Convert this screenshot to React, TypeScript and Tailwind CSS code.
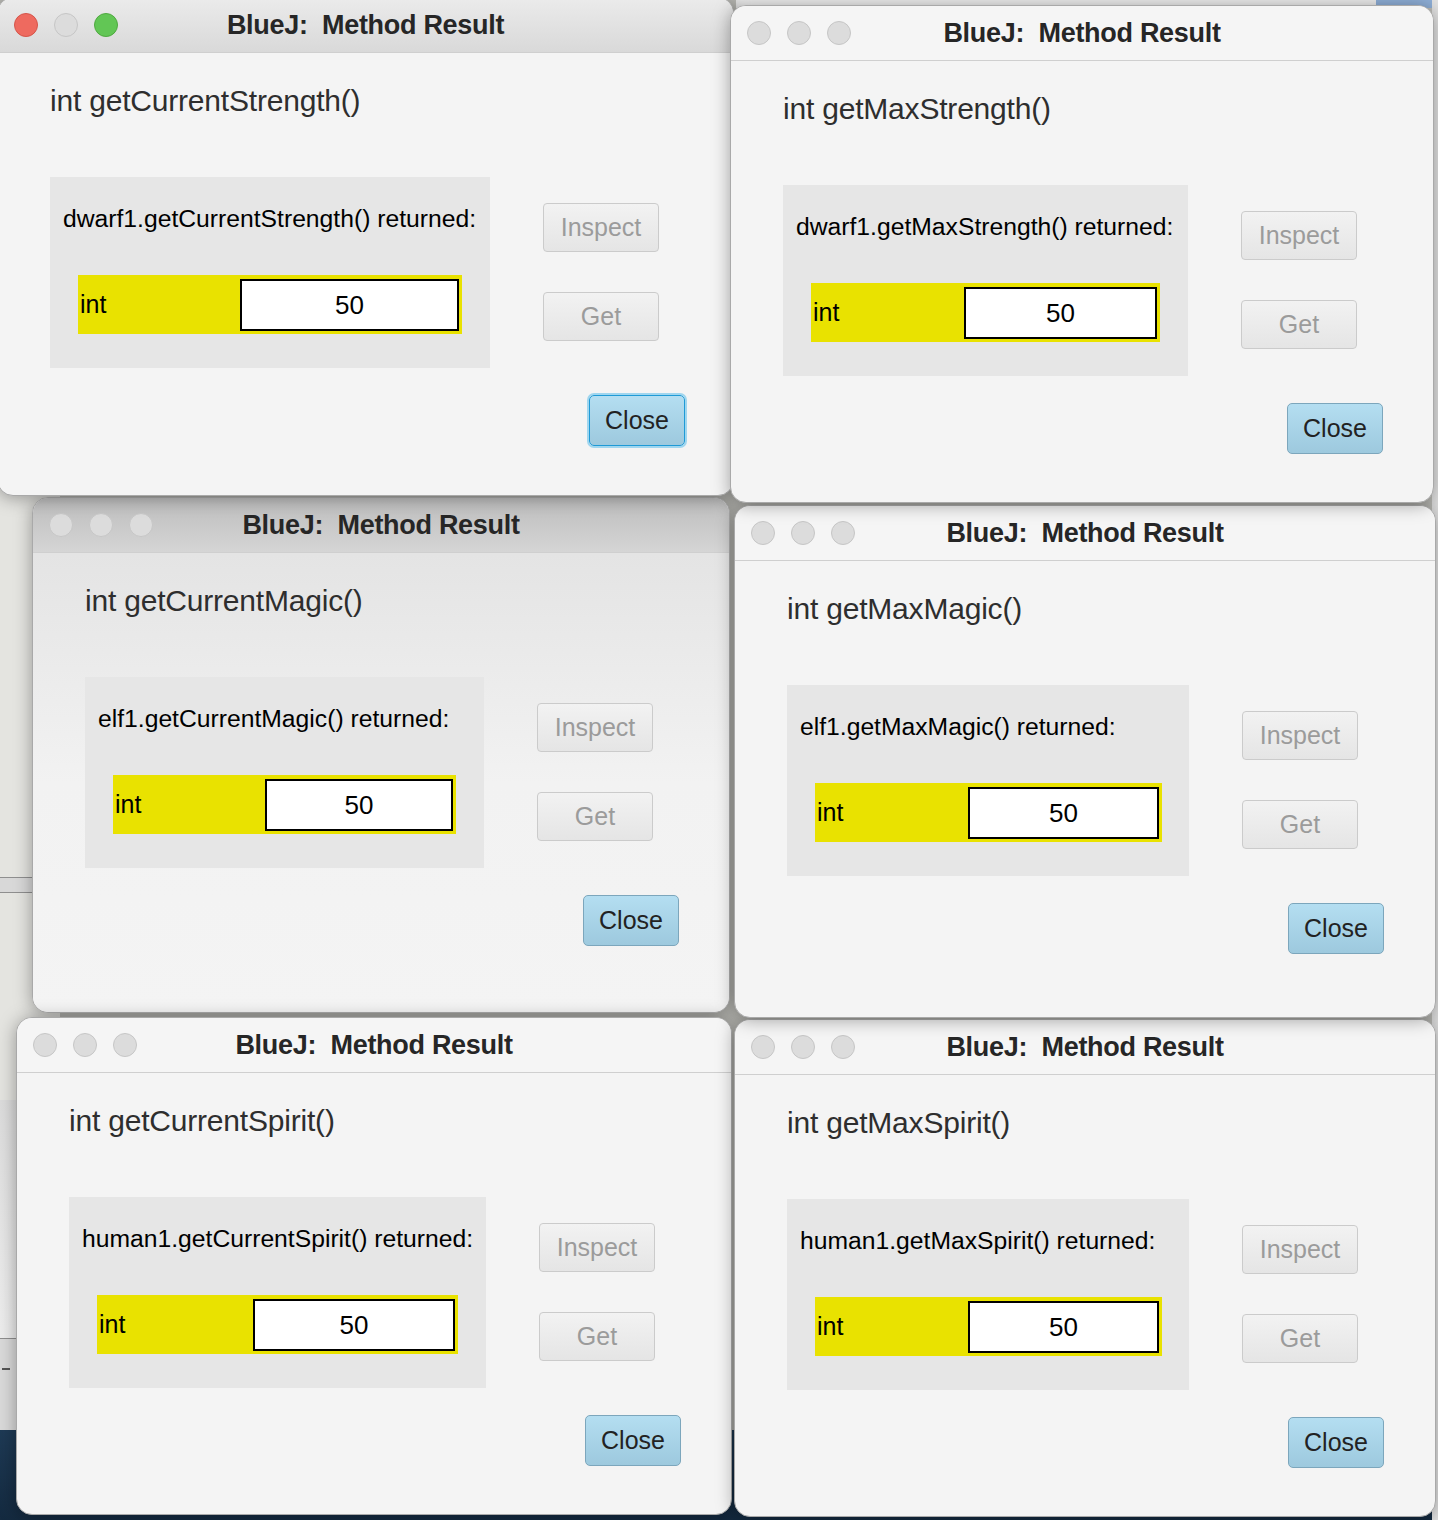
import React from "react";

type Win = {
  left: number;
  top: number;
  w: number;
  h: number;
  z: number;
  active?: boolean;
  shaded?: boolean;
  sig: string;
  text: string;
  panelW: number;
  yellowW: number;
  labelW: number;
};

const wins: Win[] = [
  { left: 32, top: 497, w: 698, h: 516, z: 1, shaded: true, sig: "int getCurrentMagic()", text: "elf1.getCurrentMagic() returned:", panelW: 399, yellowW: 343, labelW: 152 },
  { left: 16, top: 1017, w: 716, h: 498, z: 2, sig: "int getCurrentSpirit()", text: "human1.getCurrentSpirit() returned:", panelW: 417, yellowW: 361, labelW: 156 },
  { left: 734, top: 1019, w: 702, h: 498, z: 3, sig: "int getMaxSpirit()", text: "human1.getMaxSpirit() returned:", panelW: 402, yellowW: 347, labelW: 153 },
  { left: 734, top: 505, w: 702, h: 513, z: 4, sig: "int getMaxMagic()", text: "elf1.getMaxMagic() returned:", panelW: 402, yellowW: 347, labelW: 153 },
  { left: -3, top: -3, w: 737, h: 499, z: 5, active: true, sig: "int getCurrentStrength()", text: "dwarf1.getCurrentStrength() returned:", panelW: 440, yellowW: 384, labelW: 162 },
  { left: 730, top: 5, w: 704, h: 498, z: 6, sig: "int getMaxStrength()", text: "dwarf1.getMaxStrength() returned:", panelW: 405, yellowW: 349, labelW: 153 },
];

function Light({ color }: { color: "red" | "gray" | "green" }) {
  const cls =
    color === "red"
      ? "bg-[#ee6a5f] border-[#d5554a]"
      : color === "green"
      ? "bg-[#62c655] border-[#4fa940]"
      : "bg-[#dcdcdc] border-[#c6c6c6]";
  return <div className={`w-[24px] h-[24px] rounded-full border ${cls}`} />;
}

function Window({ win }: { win: Win }) {
  const titleBg = win.active
    ? "bg-gradient-to-b from-[#ebebeb] to-[#d9d9d9]"
    : win.shaded
    ? "bg-gradient-to-b from-[#bdbdbd] to-[#d5d5d5]"
    : "bg-[#f5f5f5]";
  return (
    <div
      className="absolute flex flex-col overflow-hidden rounded-[16px] border border-[#a9a9a9] bg-[#f4f4f4] shadow-[0_2px_18px_rgba(0,0,0,0.35)]"
      style={{ left: win.left, top: win.top, width: win.w, height: win.h, zIndex: win.z }}
    >
      {/* title bar */}
      <div className={`relative flex h-[55px] shrink-0 items-center border-b border-[#cfcfcf] ${titleBg}`}>
        <div className="absolute left-[16px] top-[15px] flex gap-[16px]">
          <Light color={win.active ? "red" : "gray"} />
          <Light color="gray" />
          <Light color={win.active ? "green" : "gray"} />
        </div>
        <div className="w-full text-center text-[27px] font-bold tracking-[-0.3px] text-[#262626] leading-none">
          BlueJ:&nbsp; Method Result
        </div>
      </div>
      {/* content */}
      <div
        className={`flex flex-1 flex-col pl-[52px] pt-[31px] ${
          win.shaded ? "bg-gradient-to-b from-[#e4e4e4] via-[#f2f2f2] to-[#f4f4f4]" : ""
        }`}
      >
        <div className="h-[34px] text-[30px] leading-[34px] text-[#2e2e2e] tracking-[-0.2px]">{win.sig}</div>
        <div className="mt-[59px] flex w-fit flex-col">
          <div className="flex pr-[26px]">
            <div
              className="h-[191px] shrink-0 bg-[#e6e6e6] pl-[13px] pt-[28px]"
              style={{ width: win.panelW }}
            >
              <div className="h-[28px] whitespace-nowrap text-[24.7px] leading-[28px] text-black">{win.text}</div>
              <div
                className="ml-[15px] mt-[42px] flex h-[59px] bg-[#e9e200] pb-[3px] pr-[3px] pt-[4px]"
                style={{ width: win.yellowW }}
              >
                <div className="flex items-center pl-[2px] text-[25px] text-black" style={{ width: win.labelW }}>
                  int
                </div>
                <div className="flex flex-1 items-center justify-center border-2 border-black bg-white text-[26px] text-black">
                  50
                </div>
              </div>
            </div>
            <div className="ml-[53px] flex flex-col gap-[40px] pt-[26px]">
              <DisabledButton label="Inspect" />
              <DisabledButton label="Get" />
            </div>
          </div>
          <div className="mt-[27px] flex justify-end">
            <CloseButton focused={win.active} />
          </div>
        </div>
      </div>
    </div>
  );
}

function DisabledButton({ label }: { label: string }) {
  return (
    <div className="flex h-[49px] w-[116px] items-center justify-center rounded-[4px] border border-[#cbcbcb] bg-gradient-to-b from-[#f2f2f2] to-[#e5e5e5] text-[25px] text-[#9b9b9b]">
      {label}
    </div>
  );
}

function CloseButton({ focused }: { focused?: boolean }) {
  return (
    <div
      className={`flex h-[51px] w-[96px] items-center justify-center rounded-[5px] border bg-gradient-to-b from-[#b4def1] to-[#9dc9de] text-[25px] text-[#222] ${
        focused ? "border-[#1f9ad6] ring-2 ring-[#9fd6ef]" : "border-[#7ca6bc]"
      }`}
    >
      Close
    </div>
  );
}

export default function App() {
  return (
    <div
      className="relative h-[1520px] w-[1438px] overflow-hidden bg-[#bdbdb8]"
      style={{ fontFamily: '"Liberation Sans", Arial, sans-serif' }}
    >
      {/* desktop pieces behind windows */}
      <div className="absolute left-0 top-[480px] h-[950px] w-[60px] bg-[#e4e4e0]">
        <div className="absolute left-0 top-[397px] h-[16px] w-full border-y border-[#8f8f8f] bg-[#d8d8d8]" />
        <div className="absolute left-0 top-[620px] h-[240px] w-full bg-gradient-to-b from-[#dcdcdc] to-[#eeeeee]" />
        <div className="absolute left-0 top-[858px] h-[92px] w-full border-t border-[#8f8f8f] bg-[#dadada]" />
        <div className="absolute left-[2px] top-[888px] h-[2px] w-[8px] bg-[#555]" />
      </div>
      <div className="absolute left-0 top-[1430px] h-[90px] w-full bg-gradient-to-b from-[#1e3a55] to-[#142a40]" />
      <div className="absolute left-[736px] top-0 h-[8px] w-[640px] bg-[#ececec]" />
      <div className="absolute left-[1376px] top-0 h-[8px] w-[56px] bg-[#8eaed6]" />
      <div className="absolute left-[1432px] top-0 h-[1520px] w-[6px] bg-[#e2e2e2]" />

      {wins.map((w, i) => (
        <Window key={i} win={w} />
      ))}
    </div>
  );
}
